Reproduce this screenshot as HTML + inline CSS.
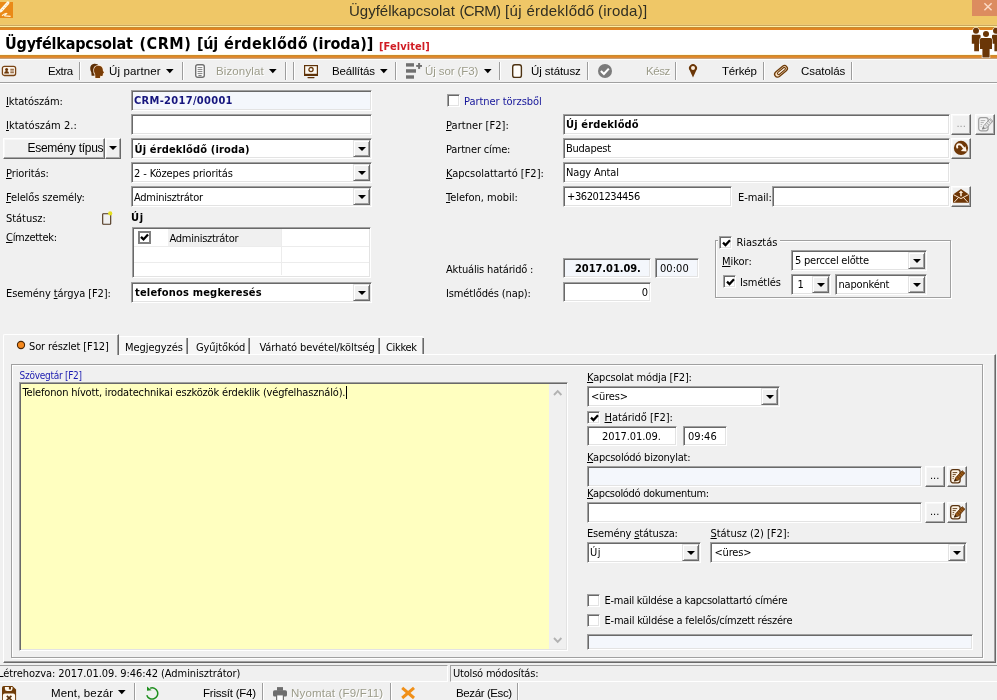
<!DOCTYPE html>
<html lang="hu"><head><meta charset="utf-8"><title>Ügyfélkapcsolat (CRM)</title>
<style>
html,body{margin:0;padding:0}
body{width:997px;height:700px;overflow:hidden;position:relative;background:#f0f0f0;font-family:"Liberation Sans",sans-serif;font-size:11px;color:#000}
.a{position:absolute;box-sizing:border-box}
.t{position:absolute;white-space:nowrap;font-family:"Liberation Sans",sans-serif}
.t u{text-decoration:underline;text-underline-offset:1px}
/* sunken edit */
.in{position:absolute;box-sizing:border-box;background:#fff;border:1px solid;border-color:#a0a0a0 #fff #fff #a0a0a0;box-shadow:inset 1px 1px 0 #696969,inset -1px -1px 0 #e3e3e3}
.in.bl{background:#f4f7fc}
/* combo arrow button */
.cb{position:absolute;box-sizing:border-box;right:1px;top:1px;bottom:1px;width:17px;background:#f0f0f0;border:1px solid;border-color:#e3e3e3 #696969 #696969 #e3e3e3;box-shadow:inset 1px 1px 0 #fff,inset -1px -1px 0 #a0a0a0}
.cb:after{content:"";position:absolute;left:4px;top:6px;border:4px solid transparent;border-top:4px solid #000;border-bottom:0}
/* raised button */
.bt{position:absolute;box-sizing:border-box;background:#f0f0f0;border:1px solid;border-color:#fff #696969 #696969 #fff;box-shadow:inset -1px -1px 0 #a8a8a8,inset 1px 1px 0 #f8f8f8}
/* checkbox */
.ck{position:absolute;box-sizing:border-box;width:13px;height:13px;background:#fff;border:1px solid;border-color:#a0a0a0 #fff #fff #a0a0a0;box-shadow:inset 1px 1px 0 #696969,inset -1px -1px 0 #e3e3e3}
.ck svg{position:absolute;left:2px;top:2px}
/* toolbar separators */
.sp{position:absolute;width:1px;background:#9d9d9d;box-shadow:1px 0 0 #fff}
svg{display:block;overflow:visible}
.tb{width:1px;background:#696969;box-shadow:-1px 0 0 #a0a0a0}
.ar{position:absolute;left:3px;top:7px;border:4px solid transparent;border-top:4px solid #000;border-bottom:0}
.ckf{position:absolute;box-sizing:border-box;width:13px;height:13px;background:#fff;border:2px solid #808080}
.ckf svg{position:absolute;left:0;top:0}
#txt{position:absolute;left:0;top:0;width:997px;height:700px;will-change:transform}
.dis{text-shadow:1px 1px 0 #fff}

</style></head>
<body>
<!-- ===== title bar ===== -->
<div class="a" style="left:0;top:0;width:997px;height:25px;background:#efc767"></div>
<div class="a" style="left:0;top:24px;width:997px;height:1px;background:#edc874"></div>
<div class="a" style="left:0;top:25px;width:997px;height:1px;background:#cba85c"></div>
<div class="a" style="left:0;top:26px;width:997px;height:1px;background:#fdeea2"></div>
<div class="a" style="left:0;top:27px;width:997px;height:1px;background:#c98a2e"></div>
<div class="a" style="left:0;top:28px;width:997px;height:2px;background:#e18522"></div>
<div class="a" style="left:0;top:30px;width:997px;height:25px;background:#fff"></div>
<div class="a" style="left:0;top:54px;width:997px;height:1px;background:#fffbe2"></div>
<div class="a" style="left:0;top:55px;width:997px;height:1px;background:#c98a2e"></div>
<div class="a" style="left:0;top:56px;width:997px;height:1px;background:#e28722"></div>
<div class="a" style="left:0;top:57px;width:997px;height:1px;background:#da8b3a"></div>
<div class="a" style="left:0;top:58px;width:997px;height:1px;background:#c8a27a"></div>
<div class="a" style="left:0;top:59px;width:997px;height:1px;background:#fffefa"></div>
<!-- app icon -->
<svg class="a" style="left:0;top:2px" width="13" height="16" viewBox="0 0 13 16">
<rect x="0" y="0" width="13" height="16" fill="#ea8a17"/>
<path d="M7.9 0.9 L1.2 8.6" stroke="#fffbea" stroke-width="3" stroke-linecap="round" fill="none"/>
<path d="M7.6 1.6 L2 8" stroke="#d9a24f" stroke-width="0.8" stroke-dasharray="0.9 1.5" fill="none"/>
<path d="M0 10.2 L1.4 8.4" stroke="#fffbea" stroke-width="1.4" fill="none"/>
<path d="M2 13.8 C3.6 12.4 5.6 11.2 6.6 11.5 C5.4 12.8 4.2 13.5 4.8 13.8 L10.6 14.4" stroke="#fff4d6" stroke-width="1.2" fill="none"/>
</svg>
<!-- close button -->
<div class="a" style="left:972px;top:0;width:25px;height:16px;background:#dc8c5f"></div>
<svg class="a" style="left:983px;top:2px" width="10" height="10" viewBox="0 0 10 10"><path d="M1.4 1.2 L8.6 8.2 M8.6 1.2 L1.4 8.2" stroke="#fcdac6" stroke-width="1.5" fill="none"/></svg>
<!-- people icon -->
<svg class="a" style="left:968px;top:26px" width="29" height="33" viewBox="968 26 29 33">
<g fill="#6a3607" stroke="#fff" stroke-width="1.2" paint-order="stroke">
<circle cx="976" cy="30.8" r="3"/>
<path d="M972.2 34.7 h7.4 q1 0 1 1 v8 h-1.6 v7.6 h-4.8 v-7.6 h-2.4 v-8 q0 -1 0.4 -1z"/>
<circle cx="996" cy="30.8" r="3"/>
<path d="M993 34.7 h6 v16.6 h-4.6 v-7.6 h-2.4 v-8 q0 -1 1 -1z"/>
<circle cx="986" cy="33.9" r="3"/>
<path d="M981.5 38 h9 q1.5 0 1.5 1.5 v9.5 h-2.4 v8.4 h-7.2 v-8.4 h-2.4 v-9.5 q0 -1.5 1.5 -1.5z"/>
</g></svg>

<!-- ===== top toolbar ===== -->
<div class="a" style="left:0;top:82px;width:997px;height:1px;background:#a0a0a0"></div>
<div class="a" style="left:0;top:83px;width:997px;height:1px;background:#fff"></div>
<div class="sp" style="left:79px;top:62px;height:18px"></div>
<div class="sp" style="left:182px;top:62px;height:18px"></div>
<div class="sp" style="left:285px;top:62px;height:18px"></div>
<div class="sp" style="left:293px;top:62px;height:18px"></div>
<div class="sp" style="left:395px;top:62px;height:18px"></div>
<div class="sp" style="left:499px;top:62px;height:18px"></div>
<div class="sp" style="left:587px;top:62px;height:18px"></div>
<div class="sp" style="left:675px;top:62px;height:18px"></div>
<div class="sp" style="left:763px;top:62px;height:18px"></div>
<div class="sp" style="left:851px;top:62px;height:18px"></div>
<!-- id card -->
<svg class="a" style="left:1px;top:65px" width="16" height="12" viewBox="0 0 16 12"><rect x="1.4" y="1.3" width="13.2" height="9.2" rx="2" fill="#fbf3ea" stroke="#7a4515" stroke-width="1.3"/><circle cx="5.6" cy="4.6" r="1.5" fill="#6a3607"/><path d="M3.2 8.6 q0 -2.6 2.4 -2.6 q2.4 0 2.4 2.6z" fill="#6a3607"/><path d="M9.3 4.3h3.6M9.3 6h3.6M9.3 7.7h3.6" stroke="#7a4515" stroke-width="0.9"/></svg>
<!-- heads -->
<svg class="a" style="left:88px;top:62px" width="18" height="18" viewBox="88 62 18 18">
<path d="M91.6 75.7 L91.3 72.2 Q90 70.2 90.2 67.8 Q90.6 64.2 94.2 63.8 Q97.8 63.6 99 66 L96 75.7z" fill="#5c2e05"/>
<path d="M95.4 77.9 L95.2 74.4 Q93.8 72.6 94 69.8 Q94.4 66 98.4 65.8 Q102.4 65.8 102.8 69.6 L102.8 70.6 L104 72.8 L102.9 73.4 L102.8 75.2 Q102.6 76 101.6 75.9 L100.3 75.8 L100 77.9z" fill="#7a3d06" stroke="#fdeedd" stroke-width="1.5" paint-order="stroke"/>
</svg>
<svg class="a" style="left:166px;top:69px" width="8" height="5" viewBox="0 0 8 5"><path d="M0 0h7.6L3.8 4.2z" fill="#000"/></svg>
<!-- document (grey) -->
<svg class="a" style="left:194px;top:63px" width="12" height="16" viewBox="0 0 12 16"><rect x="1.7" y="1.7" width="8.6" height="12.6" rx="2" fill="#fff" stroke="#707070" stroke-width="1.4"/><path d="M3.6 4.6h4.8M3.6 6.6h4.8M3.6 8.6h4.8M3.6 10.6h4.8M4.4 12.5h3.2" stroke="#707070" stroke-width="0.9"/></svg>
<svg class="a" style="left:269px;top:69px" width="8" height="5" viewBox="0 0 8 5"><path d="M0 0h7.6L3.8 4.2z" fill="#000"/></svg>
<!-- monitor -->
<svg class="a" style="left:303px;top:64px" width="16" height="15" viewBox="0 0 16 15"><rect x="1.6" y="1.6" width="12.8" height="9.8" fill="#fdf8f0" stroke="#5e3208" stroke-width="1.2"/><rect x="1" y="9.8" width="14" height="2.2" fill="#5e3208"/><circle cx="8" cy="5.6" r="2.1" fill="#fff" stroke="#6a3a0c" stroke-width="1.3"/><rect x="4.4" y="13" width="7.2" height="1.2" rx="0.6" fill="#5e3208"/></svg>
<svg class="a" style="left:380px;top:69px" width="8" height="5" viewBox="0 0 8 5"><path d="M0 0h7.6L3.8 4.2z" fill="#000"/></svg>
<!-- rows plus (grey) -->
<svg class="a" style="left:405px;top:62px" width="18" height="18" viewBox="405 62 18 18"><g fill="#707070"><rect x="406" y="63.2" width="8" height="3.4"/><rect x="406" y="69.2" width="10" height="3.5"/><rect x="406" y="75.3" width="8" height="3.4"/><rect x="416.2" y="65" width="5.8" height="1.9"/><rect x="418.1" y="63" width="2" height="5.9"/></g></svg>
<svg class="a" style="left:484px;top:69px" width="8" height="5" viewBox="0 0 8 5"><path d="M0 0h7.6L3.8 4.2z" fill="#000"/></svg>
<!-- checkbox outline -->
<svg class="a" style="left:511px;top:63px" width="12" height="16" viewBox="0 0 12 16"><rect x="1.7" y="1.7" width="8.7" height="12.7" rx="2.2" fill="#fffdfa" stroke="#4d3212" stroke-width="1.4"/></svg>
<!-- check circle -->
<svg class="a" style="left:597px;top:63px" width="16" height="16" viewBox="0 0 16 16"><circle cx="8" cy="8" r="7" fill="#7b7b7b"/><path d="M3.9 8.1 L6.9 11 L11.8 5.6" stroke="#fff" stroke-width="2.1" fill="none"/></svg>
<!-- pin -->
<svg class="a" style="left:688px;top:63px" width="10" height="15" viewBox="0 0 10 15"><path d="M5 14.4 L1.8 7.6 A4 4 0 1 1 8.2 7.6z" fill="#6a3607"/><circle cx="5" cy="5" r="2" fill="#fdeedd"/></svg>
<!-- paperclip -->
<svg class="a" style="left:773px;top:64px" width="16" height="15" viewBox="0 0 16 15"><g transform="rotate(-40 8 7.4)"><rect x="0.6" y="4.5" width="14.8" height="5.8" rx="2.9" fill="#fbe3c6" stroke="#6e3c0a" stroke-width="1.3"/><rect x="3.8" y="6.2" width="9.6" height="2.4" rx="1.2" fill="#fff6ea" stroke="#6e3c0a" stroke-width="1.1"/></g></svg>


<!-- ===== left form ===== -->
<div class="in bl" style="left:131px;top:90px;width:241px;height:21px"></div>
<div class="in" style="left:131px;top:114px;width:241px;height:21px"></div>
<div class="bt" style="left:3px;top:138px;width:102px;height:21px"></div>
<div class="bt" style="left:105px;top:138px;width:16px;height:21px"><i class="ar"></i></div>
<div class="in" style="left:131px;top:138px;width:241px;height:21px"><div class="cb"></div></div>
<div class="in" style="left:131px;top:162px;width:241px;height:21px"><div class="cb"></div></div>
<div class="in" style="left:131px;top:186px;width:241px;height:21px"><div class="cb"></div></div>
<svg class="a" style="left:101px;top:210px" width="13" height="16" viewBox="101 210 13 16"><rect x="102.7" y="213.7" width="8" height="10.6" rx="0.6" fill="none" stroke="#4a3018" stroke-width="1.1"/><circle cx="110.2" cy="213.4" r="2.1" fill="#e6e01e"/></svg>
<!-- list -->
<div class="in" style="left:132px;top:227px;width:239px;height:51px"></div>
<div class="a" style="left:134px;top:229px;width:147px;height:17px;background:#f0f0f0"></div>
<div class="a" style="left:134px;top:229px;width:34px;height:17px;background:#fff"></div>
<div class="a" style="left:134px;top:246px;width:235px;height:1px;background:#ececec"></div>
<div class="a" style="left:134px;top:262px;width:235px;height:1px;background:#ececec"></div>
<div class="a" style="left:281px;top:229px;width:1px;height:46px;background:#ececec"></div>
<div class="ckf" style="left:138px;top:231px"><svg width="9" height="9" viewBox="0 0 9 9"><path d="M1 3.9 L3.5 6.4 L8 1.4" stroke="#000" stroke-width="2.3" fill="none"/></svg></div>
<div class="in" style="left:131px;top:282px;width:241px;height:21px"><div class="cb"></div></div>

<!-- ===== right form ===== -->
<div class="ck" style="left:447px;top:94px"></div>
<div class="in" style="left:563px;top:114px;width:387px;height:21px"></div>
<div class="bt" style="left:951px;top:114px;width:20px;height:21px"></div>
<div class="bt" style="left:975px;top:114px;width:20px;height:21px"></div>
<div class="in" style="left:563px;top:138px;width:387px;height:21px"></div>
<div class="bt" style="left:951px;top:138px;width:20px;height:21px"></div>
<div class="in" style="left:563px;top:162px;width:387px;height:21px"></div>
<div class="in" style="left:563px;top:186px;width:169px;height:21px"></div>
<div class="in" style="left:772px;top:186px;width:178px;height:21px"></div>
<div class="bt" style="left:951px;top:186px;width:20px;height:21px"></div>
<div class="in bl" style="left:563px;top:258px;width:88px;height:20px"></div>
<div class="in bl" style="left:655px;top:258px;width:44px;height:20px"></div>
<div class="in" style="left:563px;top:282px;width:88px;height:20px"></div>
<!-- edit icon disabled -->
<svg class="a" style="left:977px;top:116px" width="18" height="17" viewBox="0 0 18 17"><rect x="1.7" y="1.6" width="9.4" height="13.2" rx="2.2" fill="#f3f3f3" stroke="#9e9e9e" stroke-width="1.2"/><path d="M3.6 4.6h4.6M3.6 6.6h3.2M3.6 8.6h1.6M3.6 10.6h1" stroke="#a8a8a8" stroke-width="0.9"/><path d="M5.3 13.2 L6.8 9.6 L13.2 2.7 L15.9 5.1 L9.6 12.1z" fill="#e4e4e4" stroke="#8f8f8f" stroke-width="0.8"/><path d="M8 8.4 L10.6 10.8 M9.6 6.8 L12.2 9.2 M11.2 5.1 L13.8 7.5 M12.6 3.5 L15.2 5.9" stroke="#9a9a9a" stroke-width="0.7"/><path d="M5.3 13.2 L6.3 10.8 L7.9 12.3z" fill="#777"/></svg>
<!-- round arrow -->
<svg class="a" style="left:953px;top:140px" width="16" height="16" viewBox="953 140 16 16"><circle cx="961" cy="147.9" r="7.1" fill="#6f3707"/><path d="M957.3 147.6 Q956.2 144.8 958.9 144.3 Q960.9 144.1 962.2 146 L963.6 147.8" stroke="#fff5ea" stroke-width="1.9" fill="none" stroke-linecap="round"/><path d="M966.7 151.5 L960.8 150.9 L965.5 146.2z" fill="#fff5ea"/></svg>
<!-- envelope -->
<svg class="a" style="left:952px;top:188px" width="18" height="16" viewBox="952 188 18 16"><path d="M961 189 L969 194.4 V202.8 H953 V194.4z" fill="#6f3707"/><path d="M953.4 194.6 L961 198.6 L968.6 194.6 M954.2 202.2 L958.6 197.4 M967.8 202.2 L963.4 197.4" stroke="#fbe8d4" stroke-width="1" fill="none"/><path d="M961 190.6 L963.2 193 H961.8 V196.2 H960.2 V193 H958.8z" fill="#fbe8d4"/></svg>
<!-- groupbox -->
<div class="a" style="left:715px;top:240px;width:236px;height:58px;border:1px solid #a0a0a0;box-shadow:1px 1px 0 #fff,inset 1px 1px 0 #fff"></div>
<div class="a" style="left:718px;top:236px;width:62px;height:13px;background:#f0f0f0"></div>
<div class="ck" style="left:719px;top:236px"><svg width="9" height="9" viewBox="0 0 9 9"><path d="M1 3.6 L3.5 6.1 L8 1.2" stroke="#000" stroke-width="2.2" fill="none"/></svg></div>
<div class="in" style="left:791px;top:250px;width:136px;height:21px"><div class="cb"></div></div>
<div class="ck" style="left:723px;top:275px"><svg width="9" height="9" viewBox="0 0 9 9"><path d="M1 3.6 L3.5 6.1 L8 1.2" stroke="#000" stroke-width="2.2" fill="none"/></svg></div>
<div class="in" style="left:791px;top:274px;width:40px;height:21px"><div class="cb"></div></div>
<div class="in" style="left:835px;top:274px;width:92px;height:21px"><div class="cb"></div></div>

<!-- ===== tabs ===== -->
<!-- tab page frame -->
<div class="a" style="left:3px;top:354px;width:993px;height:309px;border:1px solid;border-color:#fff #696969 #696969 #fff;box-shadow:inset -1px -1px 0 #a0a0a0"></div>
<!-- unselected tabs -->
<div class="a" style="left:118px;top:336px;width:306px;height:18px;background:#f6f6f6;border-top:1px solid #fff;border-radius:2px 2px 0 0"></div>
<div class="a tb" style="left:187px;top:338px;height:16px"></div>
<div class="a tb" style="left:249px;top:338px;height:16px"></div>
<div class="a tb" style="left:379px;top:338px;height:16px"></div>
<div class="a tb" style="left:423px;top:338px;height:16px"></div>
<!-- selected tab -->
<div class="a" style="left:3px;top:334px;width:116px;height:21px;background:#f0f0f0;border-radius:2px 0 0 0;border:1px solid;border-color:#fff #696969 transparent #fff;border-bottom:0;box-shadow:inset -1px 0 0 #a0a0a0"></div>
<svg class="a" style="left:16px;top:340px" width="10" height="10" viewBox="0 0 10 10"><circle cx="5" cy="5" r="3.6" fill="#f5881c" stroke="#4a2606" stroke-width="1.1"/></svg>
<!-- inner frame -->
<div class="a" style="left:11px;top:364px;width:972px;height:294px;border:1px solid #a0a0a0;box-shadow:1px 1px 0 #fff,inset 1px 1px 0 #fff"></div>
<!-- textarea -->
<div class="in" style="left:19px;top:382px;width:549px;height:269px;background:#ffffc0"></div>
<div class="a" style="left:549px;top:384px;width:17px;height:265px;background:#f0f0f0"></div>
<svg class="a" style="left:553px;top:389px" width="10" height="7" viewBox="0 0 10 7"><path d="M1 6 L4.7 2.2 L8.4 6" stroke="#b2b2b2" stroke-width="1.9" fill="none"/></svg>
<svg class="a" style="left:553px;top:637px" width="10" height="7" viewBox="0 0 10 7"><path d="M1 1 L4.7 4.8 L8.4 1" stroke="#b2b2b2" stroke-width="1.9" fill="none"/></svg>
<div class="a" style="left:346px;top:386px;width:1px;height:13px;background:#000"></div>
<!-- right panel -->
<div class="in" style="left:587px;top:386px;width:193px;height:21px"><div class="cb"></div></div>
<div class="ck" style="left:587px;top:411px"><svg width="9" height="9" viewBox="0 0 9 9"><path d="M1 3.6 L3.5 6.1 L8 1.2" stroke="#000" stroke-width="2.2" fill="none"/></svg></div>
<div class="in" style="left:587px;top:426px;width:90px;height:20px"></div>
<div class="in" style="left:683px;top:426px;width:44px;height:20px"></div>
<div class="in bl" style="left:587px;top:466px;width:335px;height:21px"></div>
<div class="bt" style="left:925px;top:466px;width:20px;height:21px"></div>
<div class="bt" style="left:947px;top:466px;width:20px;height:21px"></div>
<div class="in" style="left:587px;top:502px;width:335px;height:21px"></div>
<div class="bt" style="left:925px;top:502px;width:20px;height:21px"></div>
<div class="bt" style="left:947px;top:502px;width:20px;height:21px"></div>
<!-- edit icons -->
<svg class="a" style="left:949px;top:468px" width="18" height="17" viewBox="0 0 18 17"><rect x="1.7" y="1.6" width="9.4" height="13.2" rx="2.2" fill="#fdf3e4" stroke="#5a3410" stroke-width="1.3"/><path d="M3.6 4.6h4.6M3.6 6.6h3.2M3.6 8.6h1.6M3.6 10.6h1" stroke="#5a3410" stroke-width="0.9"/><path d="M5.3 13.2 L6.8 9.6 L13.2 2.7 L15.9 5.1 L9.6 12.1z" fill="#9a5a18" stroke="#5a2f06" stroke-width="0.8"/><path d="M8 8.4 L10.6 10.8 M9.6 6.8 L12.2 9.2 M11.2 5.1 L13.8 7.5 M12.6 3.5 L15.2 5.9" stroke="#5a2f06" stroke-width="0.7"/><path d="M5.3 13.2 L6.3 10.8 L7.9 12.3z" fill="#2e1803"/></svg>
<svg class="a" style="left:949px;top:504px" width="18" height="17" viewBox="0 0 18 17"><rect x="1.7" y="1.6" width="9.4" height="13.2" rx="2.2" fill="#fdf3e4" stroke="#5a3410" stroke-width="1.3"/><path d="M3.6 4.6h4.6M3.6 6.6h3.2M3.6 8.6h1.6M3.6 10.6h1" stroke="#5a3410" stroke-width="0.9"/><path d="M5.3 13.2 L6.8 9.6 L13.2 2.7 L15.9 5.1 L9.6 12.1z" fill="#9a5a18" stroke="#5a2f06" stroke-width="0.8"/><path d="M8 8.4 L10.6 10.8 M9.6 6.8 L12.2 9.2 M11.2 5.1 L13.8 7.5 M12.6 3.5 L15.2 5.9" stroke="#5a2f06" stroke-width="0.7"/><path d="M5.3 13.2 L6.3 10.8 L7.9 12.3z" fill="#2e1803"/></svg>
<div class="in" style="left:587px;top:542px;width:114px;height:21px"><div class="cb"></div></div>
<div class="in" style="left:710px;top:542px;width:257px;height:21px"><div class="cb"></div></div>
<div class="ck" style="left:587px;top:594px"></div>
<div class="ck" style="left:587px;top:614px"></div>
<div class="in bl" style="left:587px;top:634px;width:386px;height:16px"></div>


<!-- ===== status bar + bottom toolbar ===== -->
<!-- status bar -->
<div class="a" style="left:-1px;top:665px;width:449px;height:17px;border:1px solid;border-color:#a0a0a0 #fff #fff #a0a0a0"></div>
<div class="a" style="left:450px;top:665px;width:548px;height:17px;border:1px solid;border-color:#a0a0a0 #fff #fff #a0a0a0"></div>
<!-- bottom toolbar -->
<div class="sp" style="left:134px;top:683px;height:17px"></div>
<div class="sp" style="left:262px;top:683px;height:17px"></div>
<div class="sp" style="left:390px;top:683px;height:17px"></div>
<div class="sp" style="left:517px;top:683px;height:17px"></div>
<!-- save -->
<svg class="a" style="left:2px;top:686px" width="15" height="15" viewBox="0 0 15 15"><path d="M1.8 0 h8.6 l3.7 3.4 v11.6 h-14.1 v-13.2 q0 -1.8 1.8 -1.8z" fill="#6f3c08"/><path d="M2.9 1.1 h7.6 v1.6 q0 2.3 -2.3 2.3 h-3 q-2.3 0 -2.3 -2.3z" fill="#fff8ee"/><rect x="6.9" y="0.4" width="2.1" height="3.1" fill="#6f3c08"/><path d="M2.8 7.5 h8.4 q1.9 0 1.9 1.9 v5.6 h-12.2 v-5.6 q0 -1.9 1.9 -1.9z" fill="#fff8ee"/><path d="M4.8 9.8 L9.4 14.2 M9.4 9.8 L4.8 14.2" stroke="#5a2f06" stroke-width="1.7"/></svg>
<svg class="a" style="left:118px;top:690px" width="8" height="5" viewBox="0 0 8 5"><path d="M0 0h7.6L3.8 4.2z" fill="#000"/></svg>
<!-- refresh -->
<svg class="a" style="left:145px;top:685px" width="15" height="15" viewBox="145 685 15 15"><path d="M150.2 688.2 A5.6 5.6 0 1 1 146.8 695.2" fill="none" stroke="#1f8f1f" stroke-width="1.5"/><path d="M147 686.4 L147 690.8 L151.6 690.2z" fill="#1f8f1f"/></svg>
<!-- printer -->
<svg class="a" style="left:272px;top:686px" width="16" height="15" viewBox="272 686 16 15"><rect x="277" y="687.1" width="6" height="3.6" fill="#6e6e6e"/><rect x="273" y="690.2" width="14" height="6.4" rx="1.6" fill="#6e6e6e"/><rect x="276.6" y="694.8" width="6.8" height="6" fill="#fff" stroke="#6e6e6e" stroke-width="1.2"/></svg>
<!-- x -->
<svg class="a" style="left:400px;top:686px" width="16" height="14" viewBox="400 686 16 14"><path d="M402.2 687.8 L414 698 M414 687.8 L402.2 698" stroke="#f0901a" stroke-width="3" fill="none"/></svg>



<div id="txt">
<span class="t " id="t0" style="top:1px;font-size:15px;line-height:19px;left:349px;color:#302e22;letter-spacing:-0.006px;">Ügyfélkapcsolat</span>
<span class="t " id="t1" style="top:1px;font-size:15px;line-height:19px;left:459.5px;color:#302e22;letter-spacing:-0.671px;">(CRM)</span>
<span class="t " id="t2" style="top:1px;font-size:15px;line-height:19px;left:505px;color:#302e22;letter-spacing:0.319px;">[új</span>
<span class="t " id="t3" style="top:1px;font-size:15px;line-height:19px;left:526.5px;color:#302e22;letter-spacing:0.212px;">érdeklődő</span>
<span class="t " id="t4" style="top:1px;font-size:15px;line-height:19px;left:598px;color:#302e22;letter-spacing:0.223px;">(iroda)]</span>
<span class="t " id="t5" style="top:34px;font-size:16px;line-height:20px;left:5px;font-weight:bold;font-family:'DejaVu Sans Condensed','Liberation Sans',sans-serif;letter-spacing:-0.176px;">Ügyfélkapcsolat</span>
<span class="t " id="t6" style="top:34px;font-size:16px;line-height:20px;left:139.5px;font-weight:bold;font-family:'DejaVu Sans Condensed','Liberation Sans',sans-serif;letter-spacing:0.532px;">(CRM)</span>
<span class="t " id="t7" style="top:34px;font-size:16px;line-height:20px;left:197px;font-weight:bold;font-family:'DejaVu Sans Condensed','Liberation Sans',sans-serif;letter-spacing:-0.322px;">[új</span>
<span class="t " id="t8" style="top:34px;font-size:16px;line-height:20px;left:224px;font-weight:bold;font-family:'DejaVu Sans Condensed','Liberation Sans',sans-serif;letter-spacing:0.252px;">érdeklődő</span>
<span class="t " id="t9" style="top:34px;font-size:16px;line-height:20px;left:312px;font-weight:bold;font-family:'DejaVu Sans Condensed','Liberation Sans',sans-serif;letter-spacing:-0.046px;">(iroda)]</span>
<span class="t " id="t10" style="top:39px;font-size:11px;line-height:15px;left:379px;font-weight:bold;font-family:'DejaVu Sans Condensed','Liberation Sans',sans-serif;color:#d01c24;letter-spacing:0.066px;">[Felvitel]</span>
<span class="t " id="t11" style="top:63.75px;font-size:11.5px;line-height:15.5px;left:48px;letter-spacing:-0.409px;">Extra</span>
<span class="t " id="t12" style="top:63.75px;font-size:11.5px;line-height:15.5px;left:109px;letter-spacing:0.130px;">Új partner</span>
<span class="t dis" id="t13" style="top:63.75px;font-size:11.5px;line-height:15.5px;left:216px;color:#9c9c8a;letter-spacing:0.125px;">Bizonylat</span>
<span class="t " id="t14" style="top:63.75px;font-size:11.5px;line-height:15.5px;left:332px;letter-spacing:-0.145px;">Beállítás</span>
<span class="t dis" id="t15" style="top:63.75px;font-size:11.5px;line-height:15.5px;left:425px;color:#9c9c8a;letter-spacing:-0.092px;">Új sor (F3)</span>
<span class="t " id="t16" style="top:63.75px;font-size:11.5px;line-height:15.5px;left:531px;letter-spacing:-0.070px;">Új státusz</span>
<span class="t dis" id="t17" style="top:63.75px;font-size:11.5px;line-height:15.5px;left:646px;color:#9c9c8a;letter-spacing:-0.445px;">Kész</span>
<span class="t " id="t18" style="top:63.75px;font-size:11.5px;line-height:15.5px;left:722px;letter-spacing:-0.166px;">Térkép</span>
<span class="t " id="t19" style="top:63.75px;font-size:11.5px;line-height:15.5px;left:801px;letter-spacing:-0.056px;">Csatolás</span>
<span class="t " id="t20" style="top:93.5px;font-size:11px;line-height:15px;left:6px;font-family:'DejaVu Sans Condensed','Liberation Sans',sans-serif;letter-spacing:-0.102px;"><u>I</u>ktatószám:</span>
<span class="t " id="t21" style="top:117.5px;font-size:11px;line-height:15px;left:6px;font-family:'DejaVu Sans Condensed','Liberation Sans',sans-serif;letter-spacing:0.021px;"><u>I</u>ktatószám 2.:</span>
<span class="t " id="t22" style="top:140px;font-size:12px;line-height:16px;left:27.5px;letter-spacing:-0.275px;">Esemény típus</span>
<span class="t " id="t23" style="top:165.5px;font-size:11px;line-height:15px;left:6px;font-family:'DejaVu Sans Condensed','Liberation Sans',sans-serif;letter-spacing:-0.111px;"><u>P</u>rioritás:</span>
<span class="t " id="t24" style="top:189.5px;font-size:11px;line-height:15px;left:6px;font-family:'DejaVu Sans Condensed','Liberation Sans',sans-serif;letter-spacing:-0.103px;"><u>F</u>elelős személy:</span>
<span class="t " id="t25" style="top:210.5px;font-size:11px;line-height:15px;left:6px;font-family:'DejaVu Sans Condensed','Liberation Sans',sans-serif;letter-spacing:-0.035px;">Státusz:</span>
<span class="t " id="t26" style="top:230px;font-size:11px;line-height:15px;left:6px;font-family:'DejaVu Sans Condensed','Liberation Sans',sans-serif;letter-spacing:-0.272px;"><u>C</u>ímzettek:</span>
<span class="t " id="t27" style="top:285.5px;font-size:11px;line-height:15px;left:6px;font-family:'DejaVu Sans Condensed','Liberation Sans',sans-serif;letter-spacing:-0.098px;">Esemény <u>t</u>árgya [F2]:</span>
<span class="t " id="t28" style="top:92.5px;font-size:11px;line-height:15px;left:134px;font-weight:bold;font-family:'DejaVu Sans Condensed','Liberation Sans',sans-serif;color:#15157e;letter-spacing:0.312px;">CRM-2017/00001</span>
<span class="t " id="t29" style="top:141.5px;font-size:11px;line-height:15px;left:134.5px;font-weight:bold;font-family:'DejaVu Sans Condensed','Liberation Sans',sans-serif;letter-spacing:0.153px;">Új érdeklődő (iroda)</span>
<span class="t " id="t30" style="top:165.5px;font-size:11px;line-height:15px;left:134px;font-family:'DejaVu Sans Condensed','Liberation Sans',sans-serif;letter-spacing:-0.113px;">2 - Közepes prioritás</span>
<span class="t " id="t31" style="top:189.5px;font-size:11px;line-height:15px;left:134px;font-family:'DejaVu Sans Condensed','Liberation Sans',sans-serif;letter-spacing:-0.274px;">Adminisztrátor</span>
<span class="t " id="t32" style="top:209.5px;font-size:11px;line-height:15px;left:131px;font-weight:bold;font-family:'DejaVu Sans Condensed','Liberation Sans',sans-serif;letter-spacing:0.681px;">Új</span>
<span class="t " id="t33" style="top:230.5px;font-size:11px;line-height:15px;left:169.5px;font-family:'DejaVu Sans Condensed','Liberation Sans',sans-serif;letter-spacing:-0.274px;">Adminisztrátor</span>
<span class="t " id="t34" style="top:285px;font-size:11px;line-height:15px;left:135px;font-weight:bold;font-family:'DejaVu Sans Condensed','Liberation Sans',sans-serif;letter-spacing:0.188px;">telefonos megkeresés</span>
<span class="t " id="t35" style="top:93.5px;font-size:11px;line-height:15px;left:464px;font-family:'DejaVu Sans Condensed','Liberation Sans',sans-serif;color:#15159a;letter-spacing:-0.044px;">Partner törzsből</span>
<span class="t " id="t36" style="top:117.5px;font-size:11px;line-height:15px;left:446px;font-family:'DejaVu Sans Condensed','Liberation Sans',sans-serif;letter-spacing:0.052px;"><u>P</u>artner [F2]:</span>
<span class="t " id="t37" style="top:141.5px;font-size:11px;line-height:15px;left:446px;font-family:'DejaVu Sans Condensed','Liberation Sans',sans-serif;letter-spacing:-0.155px;">Partner címe:</span>
<span class="t " id="t38" style="top:165.5px;font-size:11px;line-height:15px;left:446px;font-family:'DejaVu Sans Condensed','Liberation Sans',sans-serif;letter-spacing:-0.016px;"><u>K</u>apcsolattartó [F2]:</span>
<span class="t " id="t39" style="top:189.5px;font-size:11px;line-height:15px;left:446px;font-family:'DejaVu Sans Condensed','Liberation Sans',sans-serif;letter-spacing:-0.015px;"><u>T</u>elefon, mobil:</span>
<span class="t " id="t40" style="top:189.5px;font-size:11px;line-height:15px;left:738px;font-family:'DejaVu Sans Condensed','Liberation Sans',sans-serif;letter-spacing:-0.082px;">E-mail:</span>
<span class="t " id="t41" style="top:261.5px;font-size:11px;line-height:15px;left:446px;font-family:'DejaVu Sans Condensed','Liberation Sans',sans-serif;letter-spacing:-0.165px;">Aktuális határidő :</span>
<span class="t " id="t42" style="top:285.5px;font-size:11px;line-height:15px;left:446px;font-family:'DejaVu Sans Condensed','Liberation Sans',sans-serif;letter-spacing:-0.120px;">Ismétlődés (nap):</span>
<span class="t " id="t43" style="top:116.5px;font-size:11px;line-height:15px;left:566px;font-weight:bold;font-family:'DejaVu Sans Condensed','Liberation Sans',sans-serif;letter-spacing:0.157px;">Új érdeklődő</span>
<span class="t " id="t44" style="top:140.5px;font-size:11px;line-height:15px;left:566px;font-family:'DejaVu Sans Condensed','Liberation Sans',sans-serif;letter-spacing:-0.254px;">Budapest</span>
<span class="t " id="t45" style="top:164.5px;font-size:11px;line-height:15px;left:566px;font-family:'DejaVu Sans Condensed','Liberation Sans',sans-serif;letter-spacing:-0.168px;">Nagy Antal</span>
<span class="t " id="t46" style="top:188.5px;font-size:11px;line-height:15px;left:567px;font-family:'DejaVu Sans Condensed','Liberation Sans',sans-serif;letter-spacing:-0.396px;">+36201234456</span>
<span class="t " id="t47" style="top:260.5px;font-size:11px;line-height:15px;left:575px;font-weight:bold;font-family:'DejaVu Sans Condensed','Liberation Sans',sans-serif;letter-spacing:-0.052px;">2017.01.09.</span>
<span class="t " id="t48" style="top:261px;font-size:11px;line-height:15px;left:660px;font-family:'DejaVu Sans Condensed','Liberation Sans',sans-serif;letter-spacing:0.057px;">00:00</span>
<span class="t " id="t49" style="top:285px;font-size:11px;line-height:15px;right:349px;font-family:'DejaVu Sans Condensed','Liberation Sans',sans-serif;">0</span>
<span class="t " id="t50" style="top:235px;font-size:11px;line-height:15px;left:736.5px;font-family:'DejaVu Sans Condensed','Liberation Sans',sans-serif;letter-spacing:-0.043px;">Riasztás</span>
<span class="t " id="t51" style="top:253.5px;font-size:11px;line-height:15px;left:722px;font-family:'DejaVu Sans Condensed','Liberation Sans',sans-serif;letter-spacing:-0.018px;"><u>M</u>ikor:</span>
<span class="t " id="t52" style="top:274.5px;font-size:11px;line-height:15px;left:740px;font-family:'DejaVu Sans Condensed','Liberation Sans',sans-serif;letter-spacing:-0.111px;">Ismétlés</span>
<span class="t " id="t53" style="top:253px;font-size:11px;line-height:15px;left:795px;font-family:'DejaVu Sans Condensed','Liberation Sans',sans-serif;letter-spacing:-0.216px;">5 perccel előtte</span>
<span class="t " id="t54" style="top:277px;font-size:11px;line-height:15px;left:797.5px;font-family:'DejaVu Sans Condensed','Liberation Sans',sans-serif;letter-spacing:0.503px;">1</span>
<span class="t " id="t55" style="top:277px;font-size:11px;line-height:15px;left:838.5px;font-family:'DejaVu Sans Condensed','Liberation Sans',sans-serif;letter-spacing:-0.192px;">naponként</span>
<span class="t " id="t56" style="top:338.5px;font-size:11px;line-height:15px;left:29px;font-family:'DejaVu Sans Condensed','Liberation Sans',sans-serif;letter-spacing:-0.111px;">Sor részlet [F12]</span>
<span class="t " id="t57" style="top:339.5px;font-size:11px;line-height:15px;left:125px;font-family:'DejaVu Sans Condensed','Liberation Sans',sans-serif;letter-spacing:-0.054px;">Megjegyzés</span>
<span class="t " id="t58" style="top:339.5px;font-size:11px;line-height:15px;left:196px;font-family:'DejaVu Sans Condensed','Liberation Sans',sans-serif;letter-spacing:-0.095px;">Gyűjtőkód</span>
<span class="t " id="t59" style="top:339.5px;font-size:11px;line-height:15px;left:259.5px;font-family:'DejaVu Sans Condensed','Liberation Sans',sans-serif;letter-spacing:-0.082px;">Várható bevétel/költség</span>
<span class="t " id="t60" style="top:339.5px;font-size:11px;line-height:15px;left:386px;font-family:'DejaVu Sans Condensed','Liberation Sans',sans-serif;letter-spacing:-0.294px;">Cikkek</span>
<span class="t " id="t61" style="top:368.5px;font-size:10px;line-height:14px;left:19.5px;font-family:'DejaVu Sans Condensed','Liberation Sans',sans-serif;color:#1c1cb0;letter-spacing:-0.267px;">Szövegtár [F2]</span>
<span class="t " id="t62" style="top:384.5px;font-size:11px;line-height:15px;left:22.5px;font-family:'DejaVu Sans Condensed','Liberation Sans',sans-serif;letter-spacing:-0.167px;">Telefonon hívott, irodatechnikai eszközök érdeklik (végfelhasználó).</span>
<span class="t " id="t63" style="top:370px;font-size:11px;line-height:15px;left:587px;font-family:'DejaVu Sans Condensed','Liberation Sans',sans-serif;letter-spacing:-0.158px;"><u>K</u>apcsolat módja [F2]:</span>
<span class="t " id="t64" style="top:389px;font-size:11px;line-height:15px;left:591px;font-family:'DejaVu Sans Condensed','Liberation Sans',sans-serif;letter-spacing:-0.190px;">&lt;üres&gt;</span>
<span class="t " id="t65" style="top:409.5px;font-size:11px;line-height:15px;left:604.5px;font-family:'DejaVu Sans Condensed','Liberation Sans',sans-serif;letter-spacing:-0.037px;"><u>H</u>atáridő [F2]:</span>
<span class="t " id="t66" style="top:429px;font-size:11px;line-height:15px;left:602px;font-family:'DejaVu Sans Condensed','Liberation Sans',sans-serif;letter-spacing:-0.091px;">2017.01.09.</span>
<span class="t " id="t67" style="top:429px;font-size:11px;line-height:15px;left:688px;font-family:'DejaVu Sans Condensed','Liberation Sans',sans-serif;letter-spacing:0.057px;">09:46</span>
<span class="t " id="t68" style="top:450px;font-size:11px;line-height:15px;left:587px;font-family:'DejaVu Sans Condensed','Liberation Sans',sans-serif;letter-spacing:-0.225px;"><u>K</u>apcsolódó bizonylat:</span>
<span class="t " id="t69" style="top:485.5px;font-size:11px;line-height:15px;left:587px;font-family:'DejaVu Sans Condensed','Liberation Sans',sans-serif;letter-spacing:-0.314px;"><u>K</u>apcsolódó dokumentum:</span>
<span class="t " id="t70" style="top:526px;font-size:11px;line-height:15px;left:587px;font-family:'DejaVu Sans Condensed','Liberation Sans',sans-serif;letter-spacing:-0.160px;">Esemény <u>s</u>tátusza:</span>
<span class="t " id="t71" style="top:526px;font-size:11px;line-height:15px;left:710.5px;font-family:'DejaVu Sans Condensed','Liberation Sans',sans-serif;letter-spacing:-0.047px;"><u>S</u>tátusz (2) [F2]:</span>
<span class="t " id="t72" style="top:545px;font-size:11px;line-height:15px;left:590px;font-family:'DejaVu Sans Condensed','Liberation Sans',sans-serif;letter-spacing:0.400px;">Új</span>
<span class="t " id="t73" style="top:545px;font-size:11px;line-height:15px;left:714.5px;font-family:'DejaVu Sans Condensed','Liberation Sans',sans-serif;letter-spacing:-0.190px;">&lt;üres&gt;</span>
<span class="t " id="t74" style="top:592.5px;font-size:11px;line-height:15px;left:604.5px;font-family:'DejaVu Sans Condensed','Liberation Sans',sans-serif;letter-spacing:-0.261px;">E-mail küldése a kapcsolattartó címére</span>
<span class="t " id="t75" style="top:613px;font-size:11px;line-height:15px;left:604.5px;font-family:'DejaVu Sans Condensed','Liberation Sans',sans-serif;letter-spacing:-0.219px;">E-mail küldése a felelős/címzett részére</span>
<span class="t " id="t76" style="top:468px;font-size:11px;line-height:15px;left:930px;font-family:'DejaVu Sans Condensed','Liberation Sans',sans-serif;letter-spacing:-0.046px;">...</span>
<span class="t " id="t77" style="top:504px;font-size:11px;line-height:15px;left:930px;font-family:'DejaVu Sans Condensed','Liberation Sans',sans-serif;letter-spacing:-0.046px;">...</span>
<span class="t " id="t78" style="top:116px;font-size:11px;line-height:15px;left:956.5px;font-family:'DejaVu Sans Condensed','Liberation Sans',sans-serif;color:#9a9a9a;letter-spacing:-0.046px;">...</span>
<span class="t " id="t79" style="top:665.5px;font-size:11px;line-height:15px;left:-2px;font-family:'DejaVu Sans Condensed','Liberation Sans',sans-serif;letter-spacing:-0.071px;">Létrehozva: 2017.01.09. 9:46:42 (Adminisztrátor)</span>
<span class="t " id="t80" style="top:665.5px;font-size:11px;line-height:15px;left:453px;font-family:'DejaVu Sans Condensed','Liberation Sans',sans-serif;letter-spacing:-0.197px;">Utolsó módosítás:</span>
<span class="t " id="t81" style="top:686.25px;font-size:11.5px;line-height:15.5px;left:51px;letter-spacing:0.142px;">Ment, bezár</span>
<span class="t " id="t82" style="top:686.25px;font-size:11.5px;line-height:15.5px;left:203px;letter-spacing:-0.232px;">Frissít (F4)</span>
<span class="t dis" id="t83" style="top:686.25px;font-size:11.5px;line-height:15.5px;left:291px;color:#9c9c8a;letter-spacing:0.191px;">Nyomtat (F9/F11)</span>
<span class="t " id="t84" style="top:686.25px;font-size:11.5px;line-height:15.5px;left:456px;letter-spacing:-0.389px;">Bezár (Esc)</span>
</div>
</body></html>
